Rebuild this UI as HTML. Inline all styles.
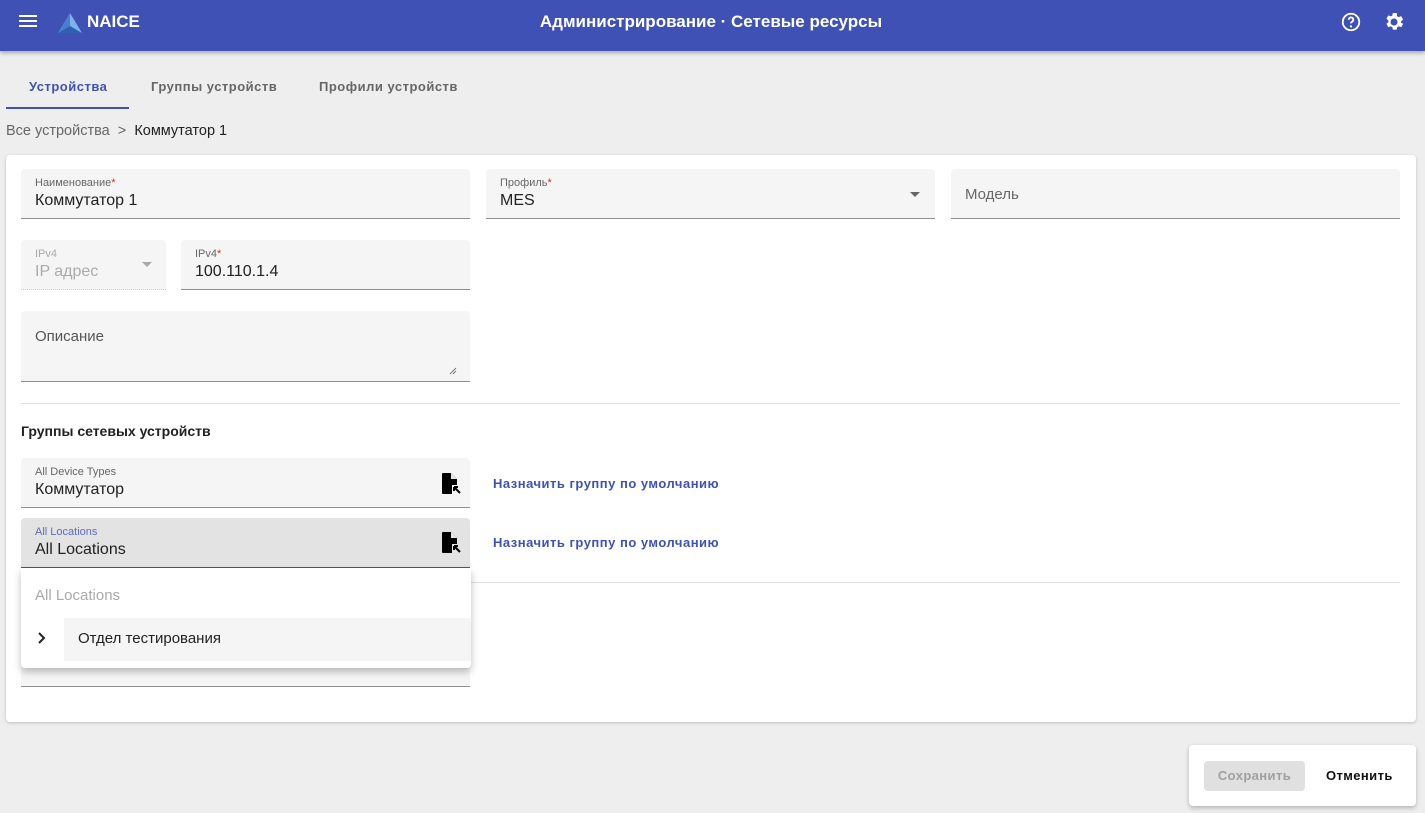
<!DOCTYPE html>
<html><head><meta charset="utf-8"><style>
*{box-sizing:border-box;margin:0;padding:0}
body{width:1425px;height:813px;background:#eeeeee;font-family:"Liberation Sans","Noto Sans CJK SC",sans-serif;position:relative;overflow:hidden;color:#212121}
.hdr{position:absolute;left:0;top:0;width:1425px;height:51px;background:#3f51b5;box-shadow:0 2px 4px rgba(0,0,0,.3);color:#fff}
.abs{position:absolute}
.f{position:absolute;background:#f5f5f5;border-bottom:1px solid #8f8f8f;border-radius:4px 4px 0 0}
.lab{position:absolute;left:14px;top:8px;font-size:11px;color:#666}
.val{position:absolute;left:14px;top:23px;font-size:16px;color:#212121}
.req{color:#d32f2f}
.link{position:absolute;left:493px;font-size:13px;font-weight:bold;color:#3f51b5;letter-spacing:.5px}
.tab{position:absolute;top:79px;font-size:13px;font-weight:bold;letter-spacing:.5px;color:#666}
</style></head><body>
<div class="hdr">
 <svg class="abs" style="left:19px;top:14px" width="18" height="14"><rect y="1" width="18" height="2" fill="#fff"/><rect y="6" width="18" height="2" fill="#fff"/><rect y="11" width="18" height="2" fill="#fff"/></svg>
 <svg class="abs" style="left:57px;top:12px" width="26" height="22"><polygon points="13,1 25,21 1,21" fill="#7fb0f0"/><polygon points="13,1 13,14 1,21" fill="#4a7fd0"/><polygon points="13,14 25,21 1,21" fill="#2f5fb0"/></svg>
 <div class="abs" style="left:87px;top:12px;font-size:17px;font-weight:bold">NAICE</div>
 <div class="abs" style="left:0;width:1422px;top:12px;text-align:center;font-size:17px;font-weight:bold">Администрирование · Сетевые ресурсы</div>
 <svg class="abs" style="left:1340px;top:11px" width="22" height="22" viewBox="0 0 24 24"><circle cx="12" cy="12" r="9" fill="none" stroke="#fff" stroke-width="2"/><path d="M9.5 9.5a2.5 2.5 0 1 1 3.5 2.3c-.7.4-1 .9-1 1.7" fill="none" stroke="#fff" stroke-width="2"/><circle cx="12" cy="16.8" r="1.2" fill="#fff"/></svg>
 <svg class="abs" style="left:1382px;top:10px" width="24" height="24" viewBox="0 0 24 24"><path fill="#fff" d="M19.1 12.9a7 7 0 0 0 0-1.8l2-1.6-2-3.4-2.4 1a7 7 0 0 0-1.6-.9L14.8 3h-4l-.4 2.5a7 7 0 0 0-1.6.9l-2.4-1-2 3.4 2 1.6a7 7 0 0 0 0 1.8l-2 1.6 2 3.4 2.4-1c.5.4 1 .7 1.6.9l.4 2.5h4l.4-2.5c.6-.2 1.1-.5 1.6-.9l2.4 1 2-3.4zM12 15.5a3.5 3.5 0 1 1 0-7 3.5 3.5 0 0 1 0 7z"/></svg>
</div>
<div class="tab" style="left:29px;color:#3f51b5">Устройства</div>
<div class="tab" style="left:151px">Группы устройств</div>
<div class="tab" style="left:319px">Профили устройств</div>
<div class="abs" style="left:6px;top:107px;width:123px;height:2px;background:#3f51b5"></div>
<div class="abs" style="left:6px;top:123px;font-size:14.5px;color:#666">Все устройства &nbsp;&gt;&nbsp; <span style="color:#212121">Коммутатор 1</span></div>

<div class="abs" style="left:6px;top:155px;width:1410px;height:567px;background:#fff;border-radius:4px;box-shadow:0 1px 3px rgba(0,0,0,.2)"></div>

<div class="f" style="left:21px;top:169px;width:449px;height:50px"><div class="lab">Наименование<span class="req">*</span></div><div class="val">Коммутатор 1</div></div>
<div class="f" style="left:486px;top:169px;width:449px;height:50px"><div class="lab">Профиль<span class="req">*</span></div><div class="val">MES</div><div class="abs" style="right:15px;top:23px;border:5px solid transparent;border-top-color:#666"></div></div>
<div class="f" style="left:951px;top:169px;width:449px;height:50px"><div class="val" style="top:17px;color:#666;font-size:15px">Модель</div></div>

<div class="f" style="left:21px;top:240px;width:145px;height:50px;border-bottom:1px dotted #ccc"><div class="lab" style="color:#aaa">IPv4</div><div class="val" style="color:#aaa">IP адрес</div><div class="abs" style="right:14px;top:22px;border:5px solid transparent;border-top-color:#aaa"></div></div>
<div class="f" style="left:181px;top:240px;width:289px;height:50px"><div class="lab">IPv4<span class="req">*</span></div><div class="val">100.110.1.4</div></div>

<div class="f" style="left:21px;top:311px;width:449px;height:71px"><div class="val" style="top:17px;color:#555;font-size:15px">Описание</div><svg class="abs" style="right:13px;bottom:6px" width="8" height="8"><path d="M1 7L7 1M4 7L7 4" stroke="#777"/></svg></div>

<div class="abs" style="left:21px;top:403px;width:1379px;height:1px;background:#e0e0e0"></div>
<div class="abs" style="left:21px;top:423px;font-size:14px;font-weight:bold">Группы сетевых устройств</div>

<div class="f" style="left:21px;top:458px;width:449px;height:50px"><div class="lab">All Device Types</div><div class="val">Коммутатор</div>
<svg class="abs" style="left:421px;top:15px" width="19" height="21" viewBox="0 0 19 21"><path d="M0 1q0-1 1-1h8l6 6v6h-5v9H1q-1 0-1-1z" fill="#000"/><path d="M9 0v6h6z" fill="#fff" opacity=".9"/><path d="M12 14l6 6M12 14v4M12 14h4" stroke="#000" stroke-width="2"/></svg></div>
<div class="link" style="top:476px">Назначить группу по умолчанию</div>

<div class="abs" style="left:21px;top:582px;width:1379px;height:1px;background:#e0e0e0"></div>
<div class="f" style="left:21px;top:638px;width:449px;height:49px"></div>

<div class="f" style="left:21px;top:518px;width:449px;height:50px;background:#e3e3e3;border-bottom:1px solid #3f51b5"><div class="lab" style="color:#5c6bc0">All Locations</div><div class="val">All Locations</div>
<svg class="abs" style="left:421px;top:14px" width="19" height="21" viewBox="0 0 19 21"><path d="M0 1q0-1 1-1h8l6 6v6h-5v9H1q-1 0-1-1z" fill="#000"/><path d="M9 0v6h6z" fill="#fff" opacity=".9"/><path d="M12 14l6 6M12 14v4M12 14h4" stroke="#000" stroke-width="2"/></svg></div>
<div class="link" style="top:535px">Назначить группу по умолчанию</div>

<div class="abs" style="left:21px;top:568px;width:450px;height:100px;background:#fff;border-radius:0 0 4px 4px;box-shadow:0 4px 8px rgba(0,0,0,.25)">
 <div class="abs" style="left:14px;top:19px;font-size:15px;color:#aaa">All Locations</div>
 <div class="abs" style="left:43px;top:50px;width:407px;height:43px;background:#f5f5f5"></div>
 <svg class="abs" style="left:16px;top:64px" width="10" height="12"><path d="M2 1l5 5-5 5" fill="none" stroke="#222" stroke-width="2"/></svg>
 <div class="abs" style="left:57px;top:62px;font-size:15px;color:#212121">Отдел тестирования</div>
</div>

<div class="abs" style="left:1189px;top:745px;width:227px;height:61px;background:#fff;border-radius:4px;box-shadow:0 2px 5px rgba(0,0,0,.25)">
 <div class="abs" style="left:15px;top:16px;width:101px;height:30px;background:#e0e0e0;border-radius:4px;font-size:13px;font-weight:bold;color:#a0a0a0;text-align:center;line-height:30px;letter-spacing:.4px">Сохранить</div>
 <div class="abs" style="left:137px;top:16px;font-size:13px;font-weight:bold;line-height:30px;color:#111;letter-spacing:.4px">Отменить</div>
</div>
</body></html>
